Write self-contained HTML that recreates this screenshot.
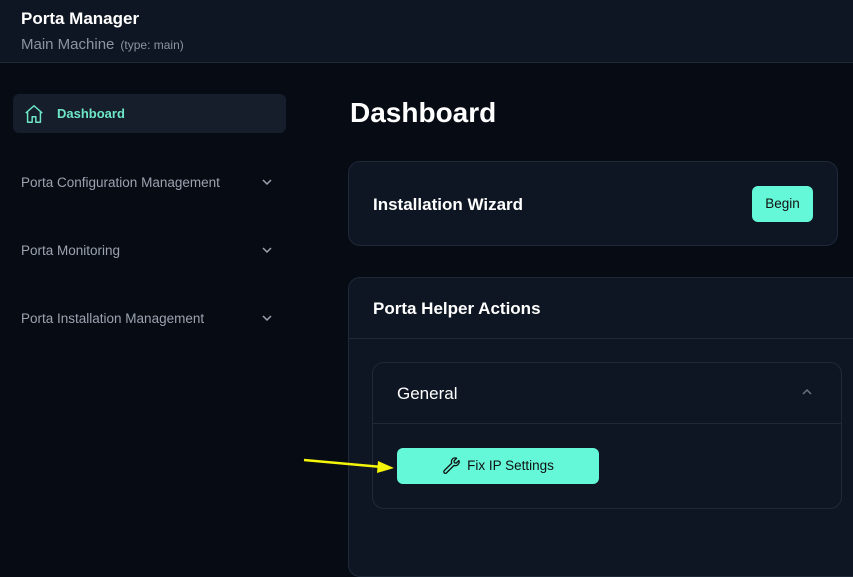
<!DOCTYPE html>
<html><head><style>
*{margin:0;padding:0;box-sizing:border-box}
body{width:853px;height:557px;overflow:hidden;background:#070b14;font-family:"Liberation Sans",sans-serif;position:relative}
.hdr{position:absolute;left:0;top:0;width:853px;height:63px;background:#0f1623;border-bottom:1px solid #1f2937}
.t1{position:absolute;left:21px;top:9px;color:#fff;font-weight:bold;font-size:17px}
.t2{position:absolute;left:21px;top:36px;color:#8a94a3;font-size:15px}
.t2 span{font-size:12px;margin-left:6px}
.nav{position:absolute;left:13px;top:94px;width:273px;height:39px;background:#161d2b;border-radius:6px}
.nav span{position:absolute;left:44px;top:12px;color:#6ee7c7;font-weight:bold;font-size:13px}
.item{position:absolute;left:21px;color:#9ca3af;font-size:13.5px}
.chev{position:absolute;left:261px}
h1{position:absolute;left:350px;top:97px;color:#fff;font-size:28px;font-weight:bold}
.card{position:absolute;background:#0f1623;border:1px solid #1f2937;border-radius:12px}
.btn{position:absolute;background:#64f8d8;border-radius:6px;color:#111;font-size:13.5px;text-align:center}
.ct{position:absolute;color:#fff;font-weight:bold;font-size:17px}
</style></head><body>
<div class="hdr"><div class="t1">Porta Manager</div><div class="t2">Main Machine<span>(type: main)</span></div></div>
<div class="nav"><svg style="position:absolute;left:10px;top:9px" width="22" height="22" viewBox="0 0 24 24" fill="none" stroke="#6ee7c7" stroke-width="1.6" stroke-linejoin="round"><path d="M3 11 12 3l9 8M5 9.5V21h5v-6h4v6h5V9.5"/></svg><span>Dashboard</span></div>
<div class="item" style="top:175px">Porta Configuration Management</div>
<div class="item" style="top:243px">Porta Monitoring</div>
<div class="item" style="top:311px">Porta Installation Management</div>
<svg class="chev" style="top:177px" width="12" height="10" viewBox="0 0 12 10" fill="none" stroke="#9ca3af" stroke-width="1.5"><path d="M2 3l4 4 4-4"/></svg>
<svg class="chev" style="top:245px" width="12" height="10" viewBox="0 0 12 10" fill="none" stroke="#9ca3af" stroke-width="1.5"><path d="M2 3l4 4 4-4"/></svg>
<svg class="chev" style="top:313px" width="12" height="10" viewBox="0 0 12 10" fill="none" stroke="#9ca3af" stroke-width="1.5"><path d="M2 3l4 4 4-4"/></svg>
<h1>Dashboard</h1>
<div class="card" style="left:348px;top:161px;width:490px;height:85px"></div>
<div class="ct" style="left:373px;top:195px">Installation Wizard</div>
<div class="btn" style="left:752px;top:186px;width:61px;height:36px;line-height:36px">Begin</div>
<div class="card" style="left:348px;top:277px;width:530px;height:300px"></div>
<div style="position:absolute;left:349px;top:338px;width:504px;height:1px;background:#1f2937"></div>
<div class="ct" style="left:373px;top:299px">Porta Helper Actions</div>
<div class="card" style="left:372px;top:362px;width:470px;height:147px"></div>
<div style="position:absolute;left:373px;top:423px;width:468px;height:1px;background:#1f2937"></div>
<div style="position:absolute;left:397px;top:384px;color:#fff;font-size:17px">General</div>
<svg style="position:absolute;left:800px;top:387px" width="14" height="10" viewBox="0 0 14 10" fill="none" stroke="#6b7280" stroke-width="1.5"><path d="M3 7l4-4 4 4"/></svg>
<div class="btn" style="left:397px;top:448px;width:202px;height:36px;line-height:36px"><svg style="vertical-align:-4px;margin-right:7px" width="18" height="18" viewBox="0 0 24 24" fill="none" stroke="#111" stroke-width="1.7" stroke-linejoin="round"><path d="M14.5 3.5a5 5 0 0 1 5-.5l-3.5 3.5.5 2.5 2.5.5L22.5 6a5 5 0 0 1-6.5 6.5L6 22.5a2 2 0 0 1-3-3L13 9.5a5 5 0 0 1 1.5-6z"/></svg>Fix IP Settings</div>
<svg style="position:absolute;left:300px;top:455px" width="95" height="20"><path d="M4 5 L82 12" stroke="#f5f50a" stroke-width="2.5"/><path d="M78 6 L94 13 L77 18Z" fill="#f5f50a"/></svg>
</body></html>
